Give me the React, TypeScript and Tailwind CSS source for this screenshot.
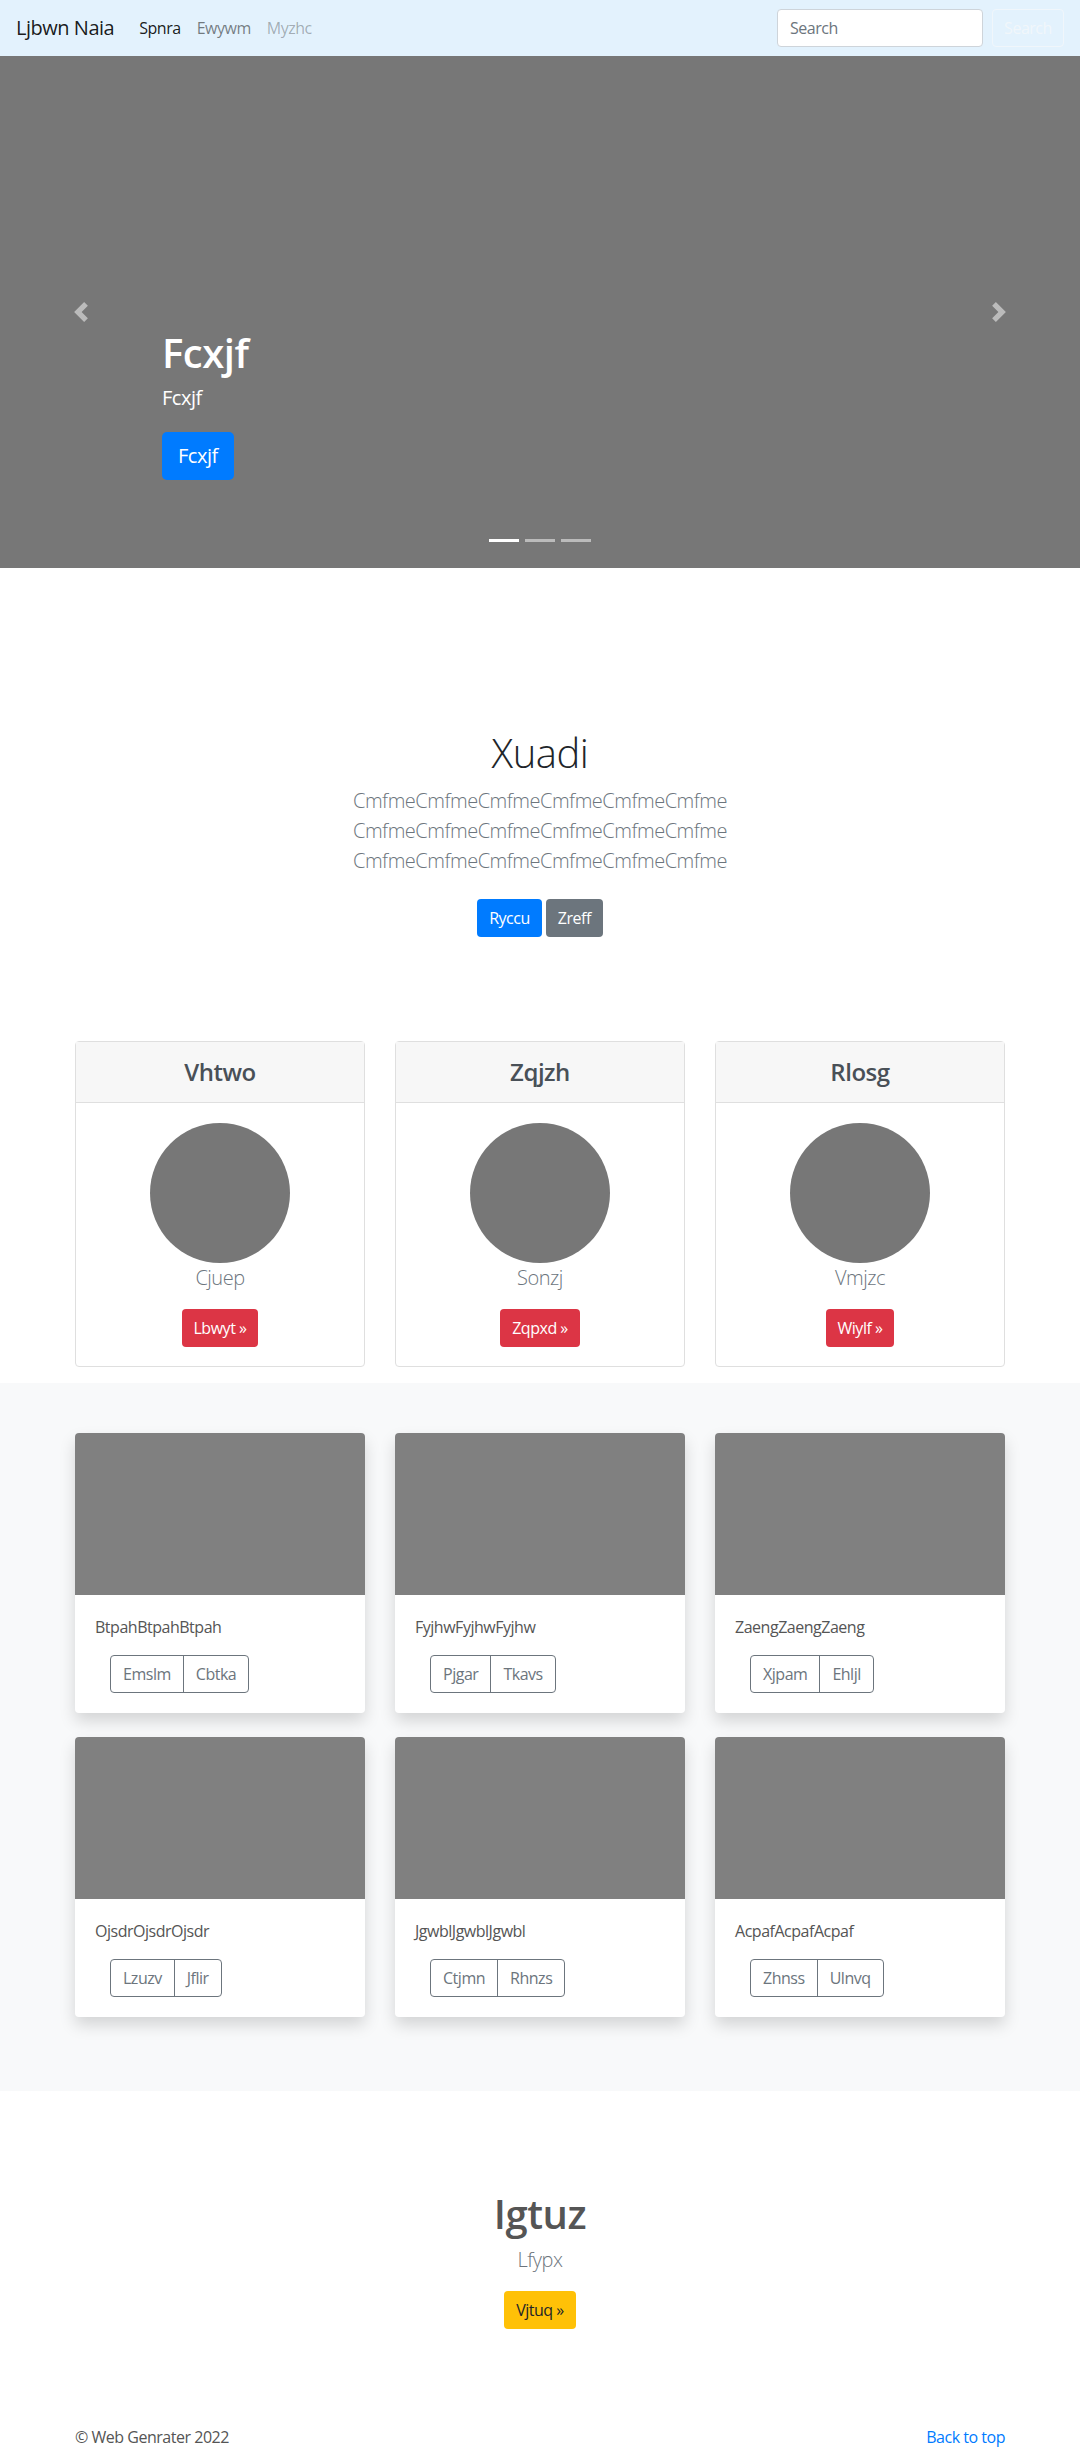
import React from "react";

const pricing = [
  { title: "Vhtwo", name: "Cjuep", btn: "Lbwyt »" },
  { title: "Zqjzh", name: "Sonzj", btn: "Zqpxd »" },
  { title: "Rlosg", name: "Vmjzc", btn: "Wiylf »" },
];

const album = [
  { text: "BtpahBtpahBtpah", a: "Emslm", b: "Cbtka" },
  { text: "FyjhwFyjhwFyjhw", a: "Pjgar", b: "Tkavs" },
  { text: "ZaengZaengZaeng", a: "Xjpam", b: "Ehljl" },
  { text: "OjsdrOjsdrOjsdr", a: "Lzuzv", b: "Jflir" },
  { text: "JgwblJgwblJgwbl", a: "Ctjmn", b: "Rhnzs" },
  { text: "AcpafAcpafAcpaf", a: "Zhnss", b: "Ulnvq" },
];

function PrevIcon() {
  return (
    <svg width="20" height="20" viewBox="0 0 8 8" fill="#fff" opacity="0.5">
      <path d="M5.25 0l-4 4 4 4 1.5-1.5L4.25 4l2.5-2.5L5.25 0z" />
    </svg>
  );
}
function NextIcon() {
  return (
    <svg width="20" height="20" viewBox="0 0 8 8" fill="#fff" opacity="0.5">
      <path d="M2.75 0l-1.5 1.5L3.75 4l-2.5 2.5L2.75 8l4-4-4-4z" />
    </svg>
  );
}

export default function App() {
  return (
    <div className="font-['Open_Sans',sans-serif] tracking-[-0.03em] text-[#555] bg-white w-[1080px] h-[2448px] overflow-hidden">
      {/* Navbar */}
      <nav className="h-[56px] bg-[#e3f2fd] flex items-center pl-4 pr-4">
        <span className="text-[20px] text-[rgba(0,0,0,0.9)] mr-[17px] leading-[30px]">Ljbwn Naia</span>
        <div className="flex items-center text-[16px] leading-[24px]">
          <span className="px-2 text-[rgba(0,0,0,0.9)]">Spnra</span>
          <span className="px-2 text-[rgba(0,0,0,0.5)]">Ewywm</span>
          <span className="px-2 text-[rgba(0,0,0,0.3)]">Myzhc</span>
        </div>
        <div className="ml-auto flex items-center gap-[9px]">
          <div className="w-[206px] h-[38px] bg-white border border-[#ced4da] rounded-[4px] flex items-center px-3 text-[16px] text-[#6c757d]">
            Search
          </div>
          <div className="h-[38px] w-[72px] border border-[rgba(248,249,250,0.6)] rounded-[4px] flex items-center justify-center text-[16px] text-[rgba(248,249,250,0.7)]">
            Search
          </div>
        </div>
      </nav>

      {/* Carousel */}
      <div className="relative h-[512px] bg-[#777]">
        <div className="absolute left-0 top-0 h-full w-[162px] flex items-center justify-center">
          <PrevIcon />
        </div>
        <div className="absolute right-0 top-0 h-full w-[162px] flex items-center justify-center">
          <NextIcon />
        </div>
        <div className="absolute left-[162px] top-[273px] flex flex-col items-start text-white">
          <h1 className="text-[40px] leading-[48px] font-semibold mb-[6px]">Fcxjf</h1>
          <p className="text-[20px] leading-[30px] mb-[19px]">Fcxjf</p>
          <div className="h-[48px] px-4 bg-[#007bff] rounded-[5px] flex items-center text-[20px]">Fcxjf</div>
        </div>
        <div className="absolute left-0 right-0 top-[483px] flex justify-center gap-[6px]">
          <span className="w-[30px] h-[3px] bg-white" />
          <span className="w-[30px] h-[3px] bg-[rgba(255,255,255,0.5)]" />
          <span className="w-[30px] h-[3px] bg-[rgba(255,255,255,0.5)]" />
        </div>
      </div>

      {/* Jumbotron */}
      <section className="pt-[161px] flex flex-col items-center text-center">
        <h1 className="text-[40px] leading-[48px] font-light text-[#212529] mb-[9px]">Xuadi</h1>
        <p className="text-[20px] leading-[30px] font-light text-[#6c757d]">
          <span className="block">CmfmeCmfmeCmfmeCmfmeCmfmeCmfme</span>
          <span className="block">CmfmeCmfmeCmfmeCmfmeCmfmeCmfme</span>
          <span className="block">CmfmeCmfmeCmfmeCmfmeCmfmeCmfme</span>
        </p>
        <div className="mt-[23px] flex gap-[4px]">
          <div className="h-[38px] px-3 bg-[#007bff] text-white rounded-[4px] flex items-center text-[16px]">Ryccu</div>
          <div className="h-[38px] px-3 bg-[#6c757d] text-white rounded-[4px] flex items-center text-[16px]">Zreff</div>
        </div>
      </section>

      {/* Pricing cards */}
      <div className="mt-[104px] mb-[16px] mx-auto w-[930px] grid grid-cols-3 gap-[30px]">
        {pricing.map((p) => (
          <div key={p.title} className="border border-[#dfdfdf] rounded-[4px] bg-white flex flex-col">
            <div className="h-[61px] bg-[#f7f7f7] border-b border-[#dfdfdf] flex items-center justify-center">
              <h4 className="text-[24px] font-semibold text-[#495057]">{p.title}</h4>
            </div>
            <div className="pt-[20px] pb-[19px] flex flex-col items-center">
              <div className="w-[140px] h-[140px] rounded-full bg-[#777]" />
              <div className="text-[20px] leading-[30px] font-light text-[#6c757d]">{p.name}</div>
              <div className="mt-[16px] h-[38px] px-3 bg-[#dc3545] text-white rounded-[4px] flex items-center text-[16px]">
                {p.btn}
              </div>
            </div>
          </div>
        ))}
      </div>

      {/* Album */}
      <section className="bg-[#f8f9fa] pt-[50px] pb-[74px]">
        <div className="mx-auto w-[930px] grid grid-cols-3 gap-x-[30px] gap-y-[24px]">
          {album.map((a) => (
            <div key={a.text} className="bg-white rounded-[4px] shadow-[0_0.5rem_1rem_rgba(0,0,0,0.15)] overflow-hidden">
              <div className="h-[162px] bg-[#808080]" />
              <div className="p-[20px]">
                <p className="text-[16px] leading-[24px] mb-[16px]">{a.text}</p>
                <div className="ml-[15px] inline-flex h-[38px] border border-[#6c757d] rounded-[4px] text-[#6c757d] text-[16px]">
                  <span className="px-3 flex items-center border-r border-[#6c757d]">{a.a}</span>
                  <span className="px-3 flex items-center">{a.b}</span>
                </div>
              </div>
            </div>
          ))}
        </div>
      </section>

      {/* Bottom */}
      <section className="pt-[99px] flex flex-col items-center text-center">
        <h2 className="text-[40px] leading-[48px] font-semibold text-[#555] mb-[7px]">Igtuz</h2>
        <p className="text-[20px] leading-[30px] font-light text-[#6c757d]">Lfypx</p>
        <div className="mt-[16px] h-[38px] px-3 bg-[#ffc107] text-[#212529] rounded-[4px] flex items-center text-[16px]">
          Vjtuq »
        </div>
      </section>

      <footer className="mt-[96px] mx-auto w-[930px] flex justify-between text-[16px] leading-[24px]">
        <p>© Web Genrater 2022</p>
        <span className="text-[#007bff]">Back to top</span>
      </footer>
    </div>
  );
}
